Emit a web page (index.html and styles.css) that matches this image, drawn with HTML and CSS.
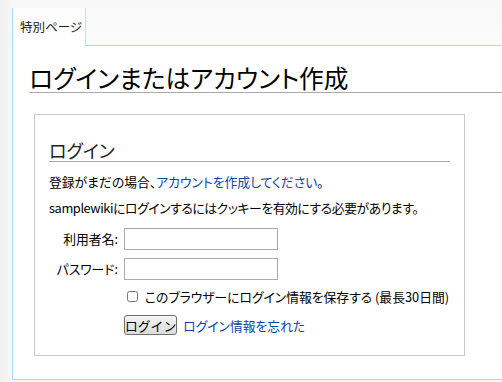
FILE: index.html
```html
<!DOCTYPE html>
<html lang="ja">
<head>
    <meta charset="UTF-8">
    <title>ログインまたはアカウント作成</title>
    <link rel="stylesheet" href="styles.css">
</head>
<body>
    <div class="page">
        <div class="tabs">
            <div class="tab">特別ページ</div>
            <div class="tab-rest"></div>
        </div>
        <div class="content">
            <h1>ログインまたはアカウント作成</h1>
            <div class="login-box">
                <h2>ログイン</h2>
                <p>登録がまだの場合、<a href="#">アカウントを作成してください</a>。</p>
                <p class="cookie-note">samplewikiにログインするにはクッキーを有効にする必要があります。</p>
                <form class="login-form" autocomplete="off">
                    <label for="name">利用者名:</label>
                    <input type="text" id="name" name="name">
                    <label for="pass">パスワード:</label>
                    <input type="password" id="pass" name="pass">
                    <div class="remember">
                        <input type="checkbox" id="remember">
                        <span>このブラウザーにログイン情報を保存する (最長30日間)</span>
                    </div>
                    <div class="actions">
                        <button type="button">ログイン</button>
                        <a href="#">ログイン情報を忘れた</a>
                    </div>
                </form>
            </div>
        </div>
    </div>
</body>
</html>
```
FILE: styles.css
```css
body {
    margin: 0;
    background: #f6f6f6;
    font-family: "Noto Sans CJK JP", "Noto Sans", sans-serif;
    font-feature-settings: "palt";
    color: #000;
}
a {
    color: #0645ad;
    text-decoration: none;
}
.page {
    padding-left: 12px;
    height: 382px;
    background: linear-gradient(90deg, #f0f0f0 0, #f8f8f8 12px);
}
.tabs {
    display: flex;
    height: 46px;
}
.tab {
    margin-top: 8px;
    width: 65px;
    padding-left: 7px;
    border-left: 1px solid #a7d7f9;
    border-right: 1px solid #c8dff0;
    background: linear-gradient(#fcfcfc, #ffffff);
    font-size: 12.5px;
    line-height: 38px;
    color: #222;
    white-space: nowrap;
}
.tab-rest {
    flex: 1;
    border-bottom: 1px solid #a7d7f9;
    background: linear-gradient(#f8f8f8, #fbfbfb);
}
.content {
    background: #fff;
    border-left: 1px solid #a7d7f9;
    border-bottom: 1px solid #a7d7f9;
    padding: 17px 0 23px 16px;
}
h1 {
    margin: 0 0 21px;
    font-size: 24.7px;
    font-weight: normal;
    line-height: 29px;
    border-bottom: 1px solid #aaa;
}
.login-box {
    margin-left: 5px;
    width: 401px;
    border: 1px solid #c8c8c8;
    padding: 24px 14px 20px;
}
h2 {
    margin: 0;
    font-size: 18px;
    font-weight: normal;
    line-height: 22px;
    border-bottom: 1px solid #aaa;
    color: #222;
}
p {
    margin: 0;
    font-size: 12.8px;
    line-height: 26px;
}
p:first-of-type {
    margin-top: 7px;
}
.cookie-note {
    letter-spacing: -0.4px;
}
.login-form {
    margin-top: 7px;
    display: grid;
    grid-template-columns: 69px 154px;
    column-gap: 6px;
    row-gap: 8px;
    font-size: 12.8px;
}
.login-form label {
    text-align: right;
    line-height: 22px;
    white-space: nowrap;
}
.login-form input[type=text],
.login-form input[type=password] {
    box-sizing: border-box;
    width: 154px;
    height: 22px;
    margin: 0;
    border: 1px solid #a9a9a9;
    padding: 1px 3px;
    font-size: 12.8px;
}
.remember, .actions {
    grid-column: 2;
    display: flex;
    align-items: center;
    white-space: nowrap;
}
.remember {
    margin-top: -2px;
    height: 20px;
}
.remember input {
    width: 11px;
    height: 11px;
    margin: 0 7px 0 3px;
    accent-color: #ccc;
}
.actions {
    margin-top: 1px;
    gap: 6px;
}
.actions button {
    height: 20px;
    width: 58px;
    padding: 0;
    border: 1px solid #707070;
    border-radius: 3px;
    background: linear-gradient(#f4f4f4, #dcdcdc);
    font-family: inherit;
    font-size: 12.8px;
    color: #000;
}
```
